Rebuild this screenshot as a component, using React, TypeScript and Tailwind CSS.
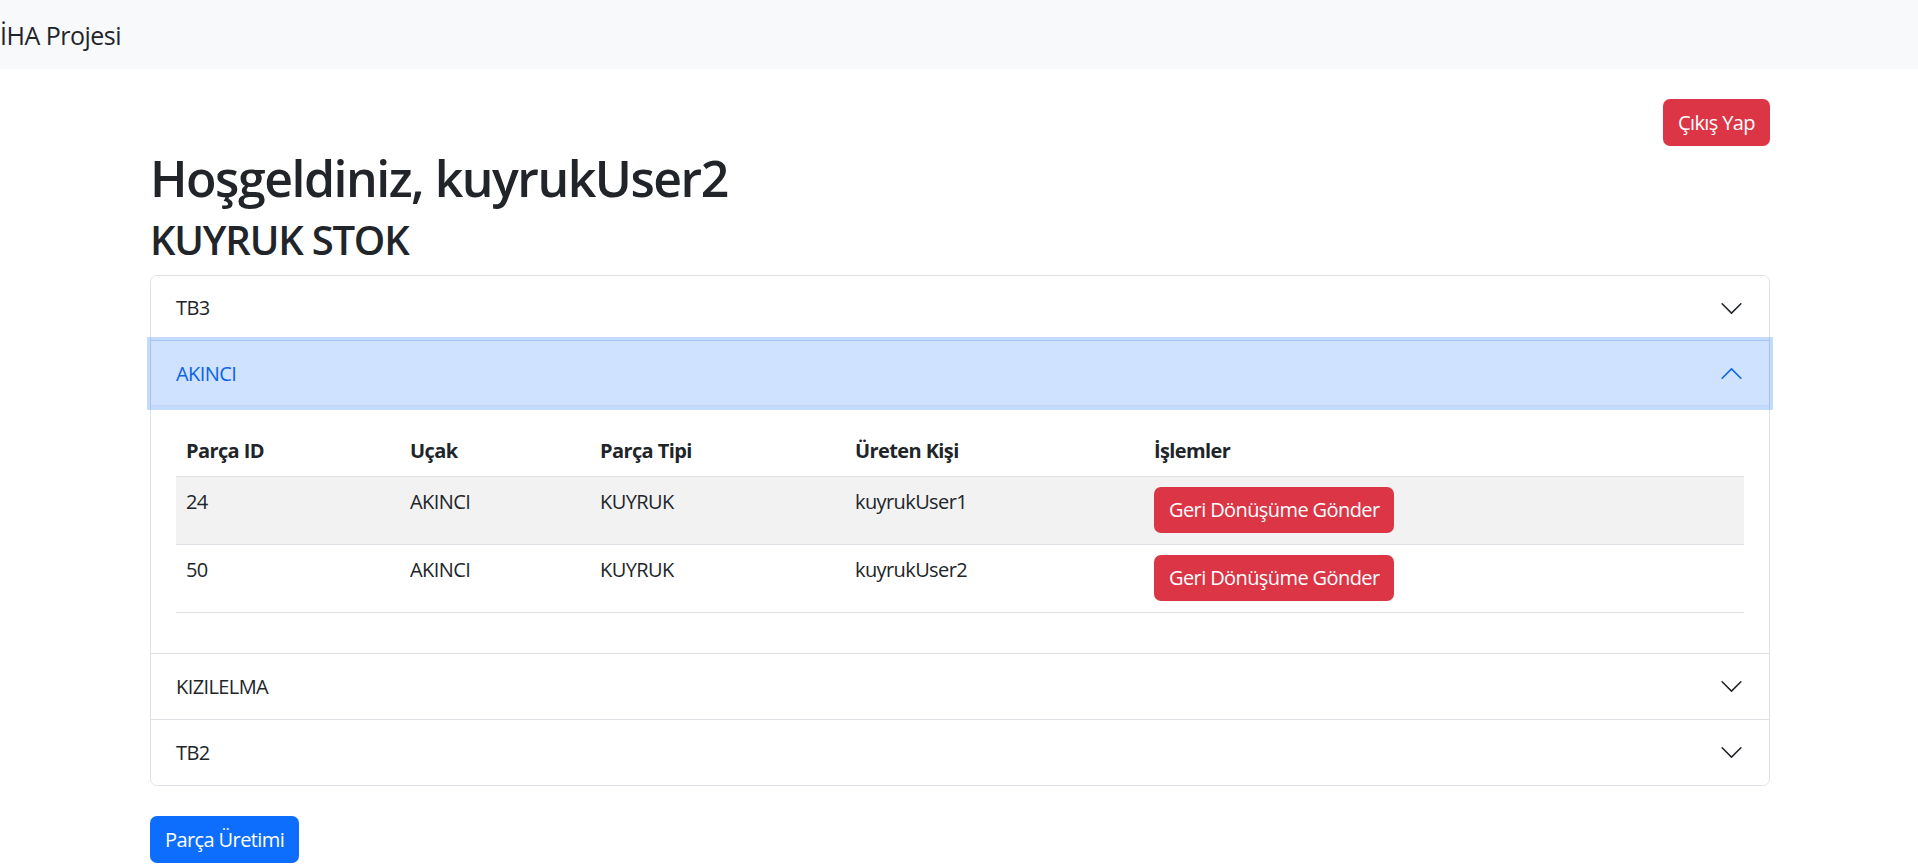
import React from 'react';

type Part = { id: number; plane: string; type: string; user: string };

const parts: Part[] = [
  { id: 24, plane: 'AKINCI', type: 'KUYRUK', user: 'kuyrukUser1' },
  { id: 50, plane: 'AKINCI', type: 'KUYRUK', user: 'kuyrukUser2' },
];

const font = { fontFamily: '"Open Sans", "Noto Sans", sans-serif' };

const Chevron = ({ up }: { up?: boolean }) => (
  <svg
    viewBox="0 0 16 16"
    fill="currentColor"
    className={up ? 'h-[25px] w-[25px] rotate-180 text-[#0c63e4]' : 'h-[25px] w-[25px] text-[#212529]'}
  >
    <path
      fillRule="evenodd"
      d="M1.646 4.646a.5.5 0 0 1 .708 0L8 10.293l5.646-5.647a.5.5 0 0 1 .708.708l-6 6a.5.5 0 0 1-.708 0l-6-6a.5.5 0 0 1 0-.708z"
    />
  </svg>
);

const AccordionHeader = ({ label, open, className }: { label: string; open?: boolean; className: string }) => (
  <button
    className={`flex w-full items-center justify-between px-[25px] text-left text-[20px] tracking-[-0.6px] ${className} ${
      open
        ? 'relative z-10 bg-[#cfe2ff] text-[#0c63e4] shadow-[inset_0_-1px_0_#c4d6f2,0_0_0_4px_rgba(13,110,253,0.25)]'
        : 'bg-white text-[#212529]'
    }`}
  >
    <span>{label}</span>
    <Chevron up={open} />
  </button>
);

const columns = [
  { label: 'Parça ID', w: 'w-[224px]' },
  { label: 'Uçak', w: 'w-[190px]' },
  { label: 'Parça Tipi', w: 'w-[255px]' },
  { label: 'Üreten Kişi', w: 'w-[299px]' },
  { label: 'İşlemler', w: '' },
];

export default function App() {
  return (
    <div className="min-h-screen bg-white text-[#212529]" style={font}>
      <nav className="flex h-[69px] items-center bg-[#f8f9fa]">
        <span className="text-[25px] leading-[38px] tracking-[-0.5px]">İHA Projesi</span>
      </nav>

      <div className="ml-[150px] w-[1620px]">
        <div className="mt-[30px] flex justify-end">
          <button className="h-[47px] rounded-[7px] bg-[#dc3545] px-[15px] text-[20px] tracking-[-0.6px] text-white">
            Çıkış Yap
          </button>
        </div>

        <h1 className="mt-[2px] text-[50px] leading-[60px] font-semibold tracking-[-1.5px]">Hoşgeldiniz, kuyrukUser2</h1>
        <h2 className="mt-[8px] text-[40px] leading-[48px] font-semibold tracking-[-1.2px]">KUYRUK STOK</h2>

        <div className="mt-[11px] rounded-[7px] border border-[#dee2e6] bg-white">
          <AccordionHeader label="TB3" className="h-[64px] rounded-t-[7px]" />

          <div className="border-t border-[#dee2e6]">
            <AccordionHeader label="AKINCI" open className="h-[65px]" />
            <div className="px-[25px] pt-[20px] pb-[20px]">
              <table className="mb-[20px] w-full table-fixed border-collapse text-[20px] tracking-[-0.6px]">
                <thead>
                  <tr className="border-b border-[#dee2e6]">
                    {columns.map(c => (
                      <th key={c.label} className={`${c.w} px-[10px] py-[10px] text-left leading-[30px] font-bold`}>
                        {c.label}
                      </th>
                    ))}
                  </tr>
                </thead>
                <tbody>
                  {parts.map((p, i) => (
                    <tr key={p.id} className={`border-b border-[#dee2e6] ${i === 0 ? 'bg-[#f2f2f2]' : 'bg-white'}`}>
                      <td className="px-[10px] pt-[10px] pb-[11px] align-top leading-[30px]">{p.id}</td>
                      <td className="px-[10px] pt-[10px] pb-[11px] align-top leading-[30px]">{p.plane}</td>
                      <td className="px-[10px] pt-[10px] pb-[11px] align-top leading-[30px]">{p.type}</td>
                      <td className="px-[10px] pt-[10px] pb-[11px] align-top leading-[30px]">{p.user}</td>
                      <td className="px-[10px] pt-[10px] pb-[11px] align-top">
                        <button className="h-[46px] rounded-[7px] bg-[#dc3545] px-[15px] text-[20px] leading-[30px] text-white">
                          Geri Dönüşüme Gönder
                        </button>
                      </td>
                    </tr>
                  ))}
                </tbody>
              </table>
            </div>
          </div>

          <div className="border-t border-[#dee2e6]">
            <AccordionHeader label="KIZILELMA" className="h-[65px]" />
          </div>
          <div className="border-t border-[#dee2e6]">
            <AccordionHeader label="TB2" className="h-[65px] rounded-b-[7px]" />
          </div>
        </div>

        <button className="mt-[30px] h-[47px] rounded-[7px] bg-[#0d6efd] px-[15px] text-[20px] tracking-[-0.6px] text-white">
          Parça Üretimi
        </button>
      </div>
    </div>
  );
}
